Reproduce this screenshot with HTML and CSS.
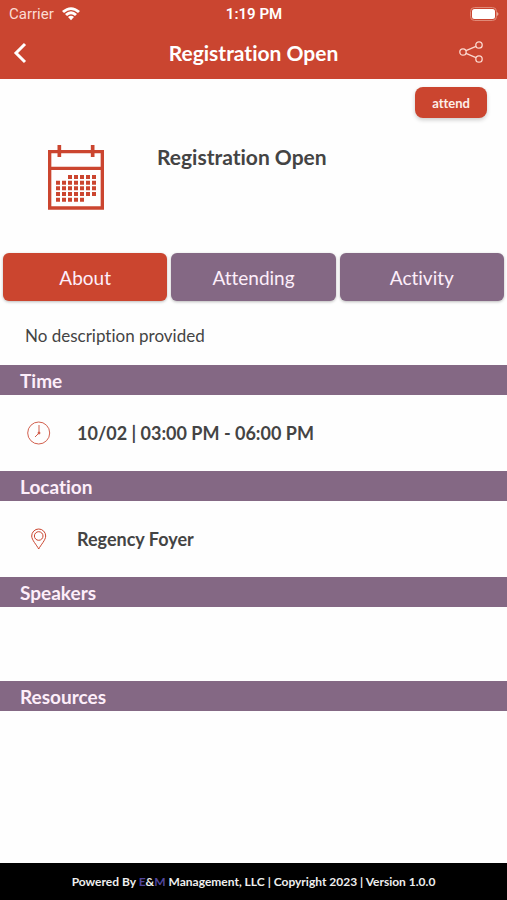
FILE: index.html
```html
<!DOCTYPE html>
<html lang="en">
<head>
<meta charset="utf-8">
<meta name="viewport" content="width=device-width, initial-scale=1">
<title>Registration Open</title>
<link rel="stylesheet" href="styles.css">
</head>
<body>
<header class="top">
  <div class="status">
    <div class="carrier">
      <span>Carrier</span>
      <svg width="18" height="14" viewBox="0 0 54 42" fill="#fff" aria-hidden="true">
        <path d="M0 12Q27 -11 54 12L48 18Q27 0 6 18Z"/>
        <path d="M9 21Q27 5 45 21L39 27Q27 17 15 27Z"/>
        <path d="M18 30Q27 23 36 30L27 40Z"/>
      </svg>
    </div>
    <time class="clock">1:19 PM</time>
    <svg class="battery" width="30" height="14" viewBox="0 0 30 14" aria-hidden="true">
      <rect x="1.500" y="0.500" width="26" height="13" rx="4" fill="none" stroke="#e08a78"/>
      <rect x="3" y="2" width="23" height="10" rx="2.500" fill="#fff"/>
      <path d="M28 5Q31 7 28 9Z" fill="#e8a697"/>
    </svg>
  </div>
  <nav class="bar">
    <button class="icon-button" type="button" aria-label="Back">
      <svg width="16" height="22" viewBox="0 0 16 22" fill="none" stroke="#fff" stroke-width="3" aria-hidden="true"><path d="M13 2L4 11L13 20"/></svg>
    </button>
    <h1 class="bar-title">Registration Open</h1>
    <button class="icon-button share" type="button" aria-label="Share">
      <svg width="24" height="22" viewBox="0 0 24 22" fill="none" stroke="#fbd8ce" stroke-width="1.300" aria-hidden="true">
        <circle cx="4" cy="11" r="3.200"/><circle cx="20" cy="4" r="3.200"/><circle cx="20" cy="18" r="3.200"/>
        <path d="M7 9.700L17 5.300M7 12.300L17 16.700"/>
      </svg>
    </button>
  </nav>
</header>
<main class="content">
  <div class="actions"><button class="attend" type="button">attend</button></div>
  <section class="summary">
    <svg class="calendar" width="56" height="65" viewBox="54 45 168 195" aria-hidden="true">
      <g fill="none" stroke="#cb452f">
        <path stroke-width="10" d="M59 65H217V234H59ZM59 115H217"/>
        <path stroke-width="11" d="M88 45V81M188 45V81"/>
        <g stroke-width="12" stroke-dasharray="12 6">
          <path d="M114 141H198"/><path d="M78 158H198"/><path d="M78 175H198"/><path d="M78 192H198"/><path d="M78 209H162"/>
        </g>
      </g>
    </svg>
    <h2 class="session">Registration Open</h2>
  </section>
  <div class="tabs" role="tablist">
    <button class="tab active" type="button" role="tab" aria-selected="true">About</button>
    <button class="tab" type="button" role="tab" aria-selected="false">Attending</button>
    <button class="tab" type="button" role="tab" aria-selected="false">Activity</button>
  </div>
  <p class="description">No description provided</p>
  <section>
    <h3 class="heading">Time</h3>
    <div class="detail">
      <svg class="detail-icon" width="24" height="24" viewBox="0 0 24 24" fill="none" stroke="#d2604e" aria-hidden="true">
        <circle cx="11.700" cy="12" r="11"/><path d="M12 4V12L8 16"/><circle cx="12" cy="12" r="1" fill="#cb452f"/>
      </svg>
      <p>10/02 | 03:00 PM - 06:00 PM</p>
    </div>
  </section>
  <section>
    <h3 class="heading">Location</h3>
    <div class="detail">
      <svg class="detail-icon" width="24" height="24" viewBox="0 0 24 24" fill="none" stroke="#cb452f" aria-hidden="true">
        <path d="M11.700 22C9.700 18 4.700 13 4.700 9A7 7 0 0 1 18.700 9C18.700 13 13.700 18 11.700 22Z"/><circle cx="11.700" cy="9" r="4.300"/>
      </svg>
      <p>Regency Foyer</p>
    </div>
  </section>
  <section>
    <h3 class="heading">Speakers</h3>
    <div class="empty"></div>
  </section>
  <section>
    <h3 class="heading">Resources</h3>
  </section>
</main>
<footer class="footer">Powered By <span class="brand">E</span>&amp;<span class="brand">M</span> Management, LLC | Copyright 2023 | Version 1.0.0</footer>
</body>
</html>
```

FILE: styles.css
```css
* {
  box-sizing: border-box;
}

body {
  display: flex;
  flex-direction: column;
  min-height: 100vh;
  margin: 0;
  background: #fefefe;
  color: #444;
  font-family: Lato, sans-serif;
  font-variant-ligatures: none;
}

h1, h2, h3, p {
  margin: 0;
}

button {
  border: 0;
  font-family: inherit;
  font-variant-ligatures: inherit;
  cursor: pointer;
}

svg {
  display: block;
}

.top {
  background: #ca4530;
  color: #fff;
}

.status {
  display: grid;
  grid-template-columns: 1fr auto 1fr;
  align-items: center;
  height: 28px;
  padding: 0 8px 0 9px;
  font-family: Roboto, sans-serif;
  font-size: 15px;
  line-height: 20px;
}

.carrier {
  display: flex;
  align-items: center;
  gap: 8px;
  color: #fbdcd4;
}

.clock {
  font-weight: 600;
}

.battery {
  justify-self: end;
}

.bar {
  display: grid;
  grid-template-columns: 48px 1fr 48px;
  align-items: center;
  height: 51px;
  padding: 0 12px 2px;
}

.bar-title {
  font-size: 21px;
  line-height: 28px;
  font-weight: 700;
  text-align: center;
}

.icon-button {
  padding: 0;
  background: none;
}

.share {
  justify-self: end;
  padding: 0 12px 2px 0;
}

.content {
  flex: 1;
}

.actions {
  display: flex;
  justify-content: flex-end;
  padding: 8px 20px 0;
}

.attend {
  height: 31px;
  padding: 0 17px;
  border-radius: 8px;
  background: #cb452f;
  box-shadow: 0 2px 4px #0003;
  color: #fdeee9;
  font-size: 13px;
  font-weight: 700;
}

.summary {
  display: flex;
  align-items: flex-start;
  gap: 53px;
  min-height: 135px;
  padding: 27px 20px 0 48px;
}

.session {
  font-size: 21px;
  line-height: 24px;
  font-weight: 700;
}

.tabs {
  display: grid;
  grid-template-columns: repeat(3, 1fr);
  gap: 4px;
  padding: 0 3px;
}

.tab {
  height: 48px;
  border-radius: 6px;
  background: #846884;
  box-shadow: 0 1px 3px #0004;
  color: #fdeefa;
  font-size: 19px;
}

.active {
  background: #cb452f;
}

.description {
  padding: 24px 25px 19px;
  font-size: 17px;
  line-height: 21px;
}

.heading {
  padding: 4px 20px 2px;
  background: #846884;
  color: #fdeefa;
  font-size: 19px;
  line-height: 24px;
  font-weight: 700;
}

.detail {
  display: flex;
  align-items: center;
  gap: 26px;
  min-height: 76px;
  padding: 0 27px;
  font-size: 18px;
  line-height: 24px;
  font-weight: 700;
}

.empty {
  min-height: 74px;
}

.footer {
  padding: 10px 16px;
  background: #000;
  color: #eee;
  font-size: 12px;
  line-height: 17px;
  font-weight: 700;
  text-align: center;
}

.brand {
  color: #51459c;
}
```
